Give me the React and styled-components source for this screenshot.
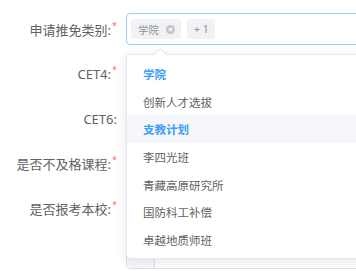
import React from "react"
import styled, { createGlobalStyle } from "styled-components"

/**
 * Styles
 */

const GlobalStyle = createGlobalStyle`
  html, body {
    margin: 0;
    padding: 0;
    background: #fff;
    overflow: hidden;
  }
  body {
    font-family: "Noto Sans", "Noto Sans CJK SC", sans-serif;
  }
`

const Form = styled.form`
  display: flex;
  flex-direction: column;
  gap: 12.8px;
  padding-top: 13px;
  width: 356px;
  height: 271px;
  overflow: hidden;
`

const Row = styled.div`
  display: grid;
  grid-template-columns: 117px 1fr;
  column-gap: 9px;
  height: 32px;
  flex-shrink: 0;
`

const Label = styled.label`
  display: flex;
  align-items: center;
  justify-content: flex-end;
  font-size: 13px;
  color: #606266;
  white-space: nowrap;
`

const Star = styled.span`
  color: #f56c6c;
  font-size: 9px;
  margin-left: 1px;
  position: relative;
  top: -4px;
`

const Field = styled.div`
  position: relative;
  width: 260px;
`

const InputBox = styled.div`
  box-sizing: border-box;
  display: flex;
  align-items: center;
  gap: 6px;
  height: 32px;
  padding-left: 4px;
  border: 1px solid ${p => (p.$focused ? "#9fcbfb" : "#dcdfe6")};
  border-radius: 4px;
  background: #fff;
`

const Prepend = styled.div`
  width: 27px;
  height: 100%;
  border-right: 1px solid #dcdfe6;
  background: #f5f7fa;
  margin-left: -4px;
`

const Tag = styled.span`
  display: inline-flex;
  align-items: center;
  gap: 7px;
  height: 20px;
  padding: 0 6px 0 7px;
  border-radius: 3px;
  background: #f0f2f5;
  color: #909399;
  font-size: 10.5px;
`

const CloseIcon = styled.span`
  display: inline-flex;
  align-items: center;
  justify-content: center;
  width: 9px;
  height: 9px;
  border-radius: 50%;
  background: #c0c4cc;
`

const Dropdown = styled.div`
  position: absolute;
  top: 41px;
  left: 0;
  width: 250px;
  box-sizing: border-box;
  padding: 5px 0 4px;
  background: #fff;
  border: 1px solid #e4e7ed;
  border-radius: 4px;
  box-shadow: 0 2px 12px rgba(0, 0, 0, 0.1);
  z-index: 2;
`

const Arrow = styled.span`
  position: absolute;
  top: -5px;
  left: 29px;
  width: 8px;
  height: 8px;
  background: #fff;
  border-top: 1px solid #e4e7ed;
  border-left: 1px solid #e4e7ed;
  transform: rotate(45deg);
`

const Option = styled.li`
  list-style: none;
  display: flex;
  align-items: center;
  height: 27.7px;
  padding-left: 16px;
  font-size: 11.5px;
  color: ${p => (p.$selected ? "#409eff" : "#606266")};
  font-weight: ${p => (p.$selected ? 700 : 400)};
  background: ${p => (p.$hover ? "#f5f7fa" : "transparent")};
`

const OptionList = styled.ul`
  margin: 0;
  padding: 0;
`

/**
 * Data
 */

const rows = [
  { label: "CET4:", required: true },
  { label: "CET6:", required: false },
  { label: "是否不及格课程:", required: true },
  { label: "是否报考本校:", required: true }
]

const options = [
  { name: "学院", selected: true },
  { name: "创新人才选拔" },
  { name: "支教计划", selected: true, hover: true },
  { name: "李四光班" },
  { name: "青藏高原研究所" },
  { name: "国防科工补偿" },
  { name: "卓越地质师班" }
]

/**
 * Main component
 */

export default function App() {
  return (
    <>
      <GlobalStyle />
      <Form>
        <Row>
          <Label>
            申请推免类别:<Star>*</Star>
          </Label>
          <Field>
            <InputBox $focused>
              <Tag>
                学院
                <CloseIcon>
                  <svg width="5" height="5" viewBox="0 0 5 5">
                    <path d="M0.8 0.8 L4.2 4.2 M4.2 0.8 L0.8 4.2" stroke="#fff" strokeWidth="1.1" />
                  </svg>
                </CloseIcon>
              </Tag>
              <Tag>+ 1</Tag>
            </InputBox>
            <Dropdown>
              <Arrow />
              <OptionList>
                {options.map(o => (
                  <Option key={o.name} $selected={o.selected} $hover={o.hover}>
                    {o.name}
                  </Option>
                ))}
              </OptionList>
            </Dropdown>
          </Field>
        </Row>

        {rows.map(r => (
          <Row key={r.label}>
            <Label>
              {r.label}
              {r.required && <Star>*</Star>}
            </Label>
            <Field>
              <InputBox />
            </Field>
          </Row>
        ))}

        <Row>
          <Label />
          <Field>
            <InputBox>
              <Prepend />
            </InputBox>
          </Field>
        </Row>
      </Form>
    </>
  )
}
